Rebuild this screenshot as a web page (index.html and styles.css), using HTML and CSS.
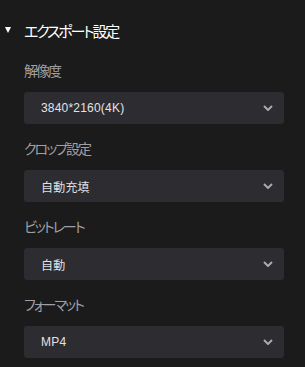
FILE: index.html
```html
<!DOCTYPE html>
<html lang="ja">
<head>
    <meta charset="UTF-8">
    <meta name="viewport" content="width=device-width, initial-scale=1.0">
    <title>エクスポート設定</title>
    <link rel="stylesheet" href="styles.css">
</head>
<body>
    <div class="panel">
        <div class="panel-header">
            <span class="caret"></span>
            <h2>エクスポート設定</h2>
        </div>

        <div class="field">
            <label>解像度</label>
            <div class="select">
                <span>3840*2160(4K)</span>
                <svg class="chevron" width="10" height="6" viewBox="0 0 10 6"><path d="M1 1 L5 5 L9 1" fill="none" stroke="#a9a9ae" stroke-width="2"/></svg>
            </div>
        </div>

        <div class="field">
            <label>クロップ設定</label>
            <div class="select">
                <span>自動充填</span>
                <svg class="chevron" width="10" height="6" viewBox="0 0 10 6"><path d="M1 1 L5 5 L9 1" fill="none" stroke="#a9a9ae" stroke-width="2"/></svg>
            </div>
        </div>

        <div class="field">
            <label>ビットレート</label>
            <div class="select">
                <span>自動</span>
                <svg class="chevron" width="10" height="6" viewBox="0 0 10 6"><path d="M1 1 L5 5 L9 1" fill="none" stroke="#a9a9ae" stroke-width="2"/></svg>
            </div>
        </div>

        <div class="field">
            <label>フォーマット</label>
            <div class="select">
                <span>MP4</span>
                <svg class="chevron" width="10" height="6" viewBox="0 0 10 6"><path d="M1 1 L5 5 L9 1" fill="none" stroke="#a9a9ae" stroke-width="2"/></svg>
            </div>
        </div>
    </div>
</body>
</html>
```

FILE: styles.css
```css
body {
    margin: 0;
    background-color: #1b1b1c;
    font-family: "Liberation Sans", Arial, "Noto Sans CJK JP", sans-serif;
    font-feature-settings: "palt";
}

.panel {
    padding: 19px 21px 0 24px;
}

.panel-header {
    display: flex;
    align-items: center;
    height: 22px;
    margin-left: -19px;
    margin-bottom: 5px;
}
.panel-header .caret {
    width: 0;
    height: 0;
    border-left: 3.5px solid transparent;
    border-right: 3.5px solid transparent;
    border-top: 6px solid #ffffff;
    margin-right: 13px;
}
.panel-header h2 {
    margin: 0;
    font-size: 15px;
    font-weight: normal;
    letter-spacing: -2.2px;
    color: #ffffff;
}

.field label {
    display: block;
    padding-top: 15px;
    margin-bottom: 11px;
    line-height: 20px;
    font-size: 14px;
    letter-spacing: -2px;
    color: #a0a0a4;
}

.select {
    display: flex;
    align-items: center;
    justify-content: space-between;
    height: 32px;
    padding: 0 11px 0 17px;
    background-color: #2c2c31;
    border-radius: 3px;
    font-size: 12px;
    color: #e2e2e6;
}
.select span {
    letter-spacing: 0.2px;
}
.chevron {
    display: block;
}
```
